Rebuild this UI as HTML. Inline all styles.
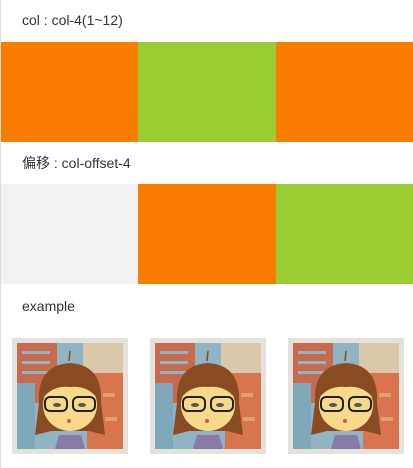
<!DOCTYPE html>
<html><head><meta charset="utf-8"><style>
*{margin:0;padding:0;box-sizing:border-box}
body{width:413px;height:468px;background:#fff;font-family:"Liberation Sans","Noto Sans CJK SC",sans-serif;color:#333;position:relative;overflow:hidden}
.bl{position:absolute;left:0;top:0;width:1px;height:468px;background:#ddd}
.t{position:absolute;left:22px;font-size:14px;line-height:16px}
.b{position:absolute;height:100px}
.o{background:#fb7d00}.g{background:#9acd32}.e{background:#f2f2f2}
.p{position:absolute;top:338px;width:116px;height:116px;background:#e4e2da;padding:5px}
</style></head><body>
<div class="bl"></div>
<div class="t" style="top:12px">col : col-4(1~12)</div>
<div class="b o" style="top:42px;left:1px;width:137px"></div>
<div class="b g" style="top:42px;left:138px;width:138px"></div>
<div class="b o" style="top:42px;left:276px;width:137px"></div>
<div class="t" style="top:155px">偏移 : col-offset-4</div>
<div class="b e" style="top:184px;left:1px;width:137px"></div>
<div class="b o" style="top:184px;left:138px;width:138px"></div>
<div class="b g" style="top:184px;left:276px;width:137px"></div>
<div class="t" style="top:298px">example</div>
<svg width="0" height="0" style="position:absolute"><defs><symbol id="pic" viewBox="0 0 106 106">
<rect width="106" height="106" fill="#8fb4c4"/>
<rect x="0" y="0" width="40" height="60" fill="#c86a4e"/>
<rect x="5" y="8" width="28" height="3" fill="#8fb4c4"/><rect x="5" y="18" width="28" height="3" fill="#8fb4c4"/><rect x="5" y="28" width="28" height="3" fill="#8fb4c4"/>
<rect x="0" y="40" width="18" height="66" fill="#7fa9ba"/>
<rect x="66" y="0" width="40" height="30" fill="#d9c9a8"/>
<rect x="70" y="30" width="36" height="76" fill="#d8744e"/>
<rect x="72" y="40" width="10" height="4" fill="#e0a070"/><rect x="86" y="50" width="12" height="4" fill="#e0a070"/><rect x="74" y="62" width="10" height="4" fill="#e0a070"/><rect x="88" y="74" width="12" height="4" fill="#e0a070"/>
<path d="M22 60 Q20 22 53 20 Q86 22 84 60 L88 92 L72 88 L34 88 L18 92 Z" fill="#8a4a22"/>
<ellipse cx="53" cy="62" rx="27" ry="26" fill="#f7d98a"/>
<path d="M26 55 Q30 30 53 30 Q76 30 80 55 Q70 42 53 44 Q36 42 26 55Z" fill="#8a4a22"/>
<rect x="28" y="54" width="22" height="14" rx="5" fill="none" stroke="#222" stroke-width="2"/>
<rect x="56" y="54" width="22" height="14" rx="5" fill="none" stroke="#222" stroke-width="2"/>
<ellipse cx="65" cy="62" rx="4" ry="2" fill="#555"/><ellipse cx="40" cy="62" rx="4" ry="2" fill="#555"/>
<circle cx="52" cy="78" r="2" fill="#d55"/>
<path d="M38 106 L42 92 L64 92 L68 106Z" fill="#8a7aa8"/>
<path d="M52 18 L53 8" stroke="#8a4a22" stroke-width="1.5"/>
</symbol></defs></svg>
<div class="p" style="left:12px"><svg width="106" height="106"><use href="#pic"/></svg></div>
<div class="p" style="left:150px"><svg width="106" height="106"><use href="#pic"/></svg></div>
<div class="p" style="left:288px"><svg width="106" height="106"><use href="#pic"/></svg></div>
</body></html>
